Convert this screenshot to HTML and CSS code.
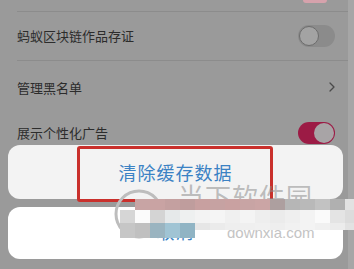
FILE: index.html
```html
<!DOCTYPE html>
<html lang="zh-CN">
<head>
<meta charset="utf-8">
<title>设置</title>
<link rel="stylesheet" href="styles.css">
</head>
<body>
<div class="device">
  <main class="screen">
    <div class="list">
      <div class="row partial sep"><span class="peek"></span></div>
      <div class="row r1 sep">
        <span class="label">蚂蚁区块链作品存证</span>
        <span class="switch off"><span class="knob"></span></span>
      </div>
      <div class="row r2">
        <span class="label">管理黑名单</span>
        <svg class="chev" width="6" height="10" viewBox="0 0 6 10"><polyline points="1,1 5,5 1,9" fill="none" stroke="#4a4a4a" stroke-width="1.3" stroke-linecap="round" stroke-linejoin="round"/></svg>
      </div>
      <div class="row r3">
        <span class="label">展示个性化广告</span>
        <span class="switch on"><span class="knob"></span></span>
      </div>
    </div>
    <div class="sheet">
      <button class="action primary">清除缓存数据</button>
      <button class="action cancel">取消</button>
    </div>
  </main>
  <div class="edge"></div>

  <div class="highlight"></div>

  <div class="watermark">
    <svg class="wm-logo" width="50" height="56" viewBox="0 0 50 56"><circle cx="25" cy="28" r="23" fill="none" stroke="#bdbdbd" stroke-width="3"/></svg>
    <span class="wm-name">当下软件园</span>
    <span class="wm-url">downxia.com</span>
  </div>

  <div class="mosaic">
    <div class="mrow m1">
      <i style="background:#c8a4a4"></i><i style="background:#c9a3a3"></i><i style="background:#c4a0a0"></i><i style="background:#bf9d9d"></i><i style="background:#c8a0a0"></i><i style="background:#c6a2a2"></i><i style="background:#c9a1a1"></i><i style="background:#c8a4a4"></i><i style="background:#cba5a5"></i><i style="background:#ad9f9f"></i><i style="background:#b6b6b6"></i><i style="background:#b9b9b9"></i><i style="background:#c2c2c2"></i><i style="background:#b0b0b0"></i><i class="last" style="background:#e2e2e2"></i>
    </div>
    <div class="mrow m2">
      <i style="background:#d6d6d6"></i><i style="background:#fbfbfb"></i><i style="background:#d4d4d4"></i><i style="background:#e6e9ea"></i><i style="background:#eef0f0"></i><i style="background:#f3f3f3"></i><i style="background:#f5f5f5"></i><i style="background:#f0f0f0"></i><i style="background:#f4f4f4"></i><i style="background:#eeeeee"></i><i style="background:#ebebeb"></i><i style="background:#efefef"></i><i style="background:#f3f3f3"></i><i style="background:#fafafa"></i><i style="background:#e4e4e4"></i><i class="last" style="background:#dcdcdc"></i>
    </div>
    <div class="mrow m3">
      <i style="background:#c6c6c6"></i><i style="background:#c0c0c0"></i><i style="background:#9ab4c0"></i><i style="background:#a0c4d4"></i><i style="background:#90b4c4"></i><i class="thin" style="background:#e6e6e6"></i><i class="thin" style="background:#ebebeb"></i><i class="thin" style="background:#eeeeee"></i><i class="thin" style="background:#efefef"></i><i class="thin" style="background:#f0f0f0"></i><i class="thin" style="background:#eeeeee"></i><i class="thin" style="background:#f1f1f1"></i><i class="thin" style="background:#f3f3f3"></i><i class="thin" style="background:#f0f0f0"></i><i class="thin" style="background:#ececec"></i><i class="thin last" style="background:#e2e2e2"></i>
    </div>
  </div>
</div>
</body>
</html>
```
FILE: styles.css
```css
html, body {
  margin: 0;
  padding: 0;
}
body {
  width: 354px;
  height: 269px;
  overflow: hidden;
  background: #9a9a9a;
  font-family: "Noto Sans CJK SC", "Noto Sans", sans-serif;
}
.device {
  position: relative;
  display: flex;
  width: 354px;
  height: 269px;
}
.screen {
  position: relative;
  flex: 1;
  background: #9a9a9a;
}
.edge {
  width: 6px;
  background: #a6a6a6;
}
.list {
  display: flex;
  flex-direction: column;
}
.row {
  display: flex;
  align-items: center;
  justify-content: space-between;
  margin-left: 17px;
  padding-right: 13px;
}
.sep {
  border-bottom: 1px solid #8c8c8c;
}
.partial {
  height: 11px;
  align-items: flex-start;
  justify-content: flex-end;
}
.peek {
  width: 24px;
  height: 3px;
  margin-right: 8px;
  border-radius: 0 0 3px 3px;
  background: #d6a2ac;
}
.r1 { height: 48px; }
.r2 { height: 53px; }
.r3 { height: 38px; }
.label {
  font-size: 13px;
  line-height: 18px;
  color: #2c2c2c;
}
.switch {
  position: relative;
  display: flex;
  align-items: center;
  width: 37px;
  height: 22px;
  box-sizing: border-box;
  border-radius: 11px;
  padding: 1px;
}
.switch.off {
  background: #8b8b8b;
  justify-content: flex-start;
}
.switch.on {
  background: #9c1b45;
  justify-content: flex-end;
}
.knob {
  width: 20px;
  height: 20px;
  box-sizing: border-box;
  border-radius: 50%;
  background: #a3a3a3;
}
.switch.off .knob {
  border: 1.5px solid #6c6c6c;
}
.switch.on .knob {
  background: #a8a4a6;
}
.chev {
  display: block;
  margin-top: -2px;
}

.sheet {
  position: absolute;
  left: 8px;
  right: 5px;
  top: 145px;
  display: flex;
  flex-direction: column;
  gap: 8px;
}
.action {
  display: flex;
  align-items: center;
  justify-content: center;
  border: 0;
  margin: 0;
  padding: 0;
  border-radius: 12px;
  font-family: "Noto Sans CJK SC", sans-serif;
  font-size: 18px;
  line-height: 1;
  letter-spacing: 1px;
  color: #3b82c4;
}
.primary {
  height: 54px;
  background: #f3f3f3;
}
.cancel {
  height: 52px;
  padding-bottom: 4px;
  background: #ffffff;
}

.highlight {
  position: absolute;
  left: 77px;
  top: 146px;
  width: 196px;
  height: 56px;
  box-sizing: border-box;
  border: 3px solid #c9302c;
  border-radius: 3px;
}

.watermark {
  position: absolute;
  left: 0;
  top: 0;
  width: 354px;
  height: 269px;
  pointer-events: none;
}
.wm-logo {
  position: absolute;
  left: 114px;
  top: 186px;
}
.wm-name {
  position: absolute;
  left: 178px;
  top: 183px;
  font-size: 26px;
  line-height: 1;
  letter-spacing: 1px;
  color: rgba(140, 140, 140, 0.55);
}
.wm-url {
  position: absolute;
  left: 227px;
  top: 225px;
  font-family: "Liberation Sans", sans-serif;
  font-size: 15px;
  line-height: 1;
  color: #c4c4c4;
}

.mosaic {
  position: absolute;
  left: 120px;
  top: 199px;
  display: flex;
  flex-direction: column;
}
.mrow {
  display: flex;
  align-items: flex-start;
}
.mrow i {
  display: block;
  width: 15px;
  height: 11px;
}
.m1 { margin-left: 15px; }
.m2 i { height: 13px; }
.m3 i { height: 15px; }
.m3 i.thin { height: 7px; }
.mrow i.last { width: 9px; }
```
